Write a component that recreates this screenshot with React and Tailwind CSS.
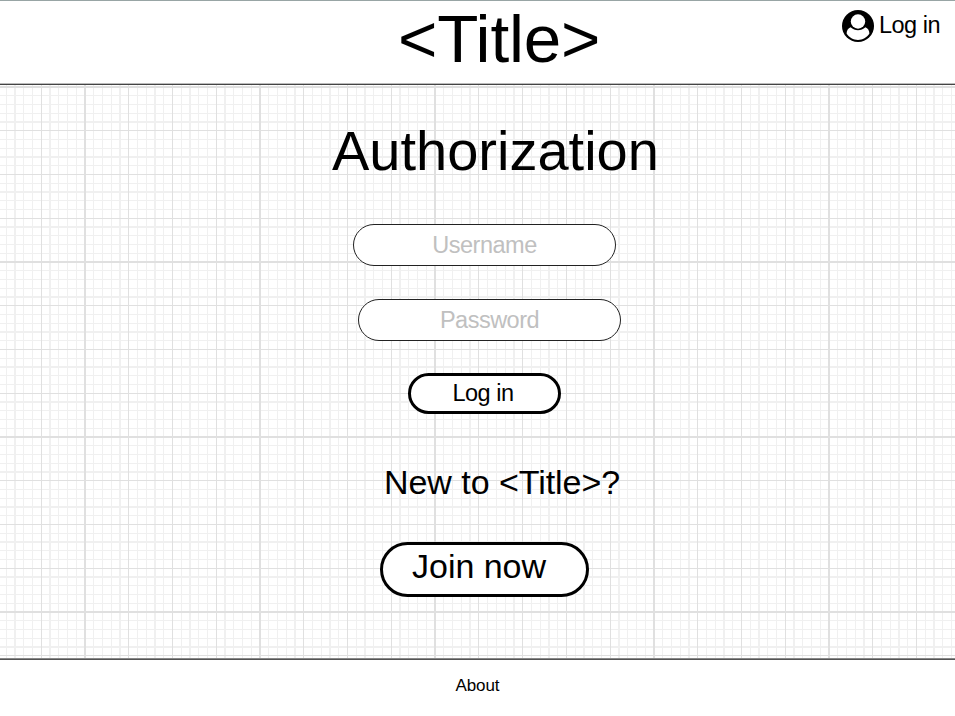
import React from "react";

// One tile of the graph paper is 175px wide and holds 20 cells of 8.75px.
const TILE = 175;
const STEPS = Array.from({ length: 20 }, (_, i) => {
  const at = i * 8.75;
  const whole = Number.isInteger(at);
  return { start: whole ? at : Math.floor(at) + 1, size: whole ? 2 : 1, major: i % 5 === 0 };
});
const ORDERED = [...STEPS.filter((s) => !s.major), ...STEPS.filter((s) => s.major)];

function PaperPattern({ id, x }) {
  return (
    <pattern id={id} x={x} y="1" width={TILE} height={TILE} patternUnits="userSpaceOnUse">
      {ORDERED.map((s) => (
        <g key={s.start} fill={s.major ? "#e0e0e0" : "#f0f0f0"}>
          <rect x={s.start} y="0" width={s.size} height={TILE} />
          <rect x="0" y={s.start} width={TILE} height={s.size} />
        </g>
      ))}
    </pattern>
  );
}

// Two sheets of paper meet at x = 480, each with its own origin.
function GridPaper() {
  return (
    <svg className="absolute inset-0 h-full w-full" shapeRendering="crispEdges" aria-hidden="true">
      <defs>
        <PaperPattern id="paper-left" x="84" />
        <PaperPattern id="paper-right" x="128" />
      </defs>
      <rect width="480" height="100%" fill="url(#paper-left)" />
      <rect x="480" width="475" height="100%" fill="url(#paper-right)" />
    </svg>
  );
}

function UserIcon() {
  return (
    <svg className="h-8 w-8" viewBox="0 0 32 32" aria-hidden="true">
      <circle cx="16" cy="16" r="16" fill="#000" />
      <path d="M4.600 23.600C4.600 20.500 6.200 18.200 8.600 17.300C12.800 21.300 19.200 21.300 23.400 17.300C25.800 18.200 27.400 20.500 27.400 23.600C24.800 27.700 20.700 29.900 16 29.900S7.200 27.700 4.600 23.600Z" fill="#fff" />
      <circle cx="16" cy="11.500" r="7.200" fill="#fff" />
    </svg>
  );
}

function Field({ label, className }) {
  return (
    <input
      aria-label={label}
      placeholder={label}
      className={`block h-[42px] rounded-full border border-[#222] bg-white p-0 pt-px text-center text-[23.5px] leading-[39px] tracking-[-0.5px] outline-none placeholder:text-[#c0c0c0] placeholder:opacity-100 ${className}`}
    />
  );
}

export default function App() {
  return (
    <div className="flex h-[716px] w-[955px] flex-col overflow-hidden bg-white font-['Liberation_Sans',Arial,sans-serif] text-black">
      <header className="flex h-[85px] shrink-0 justify-between border-b border-t border-b-[#444] border-t-[#98a5a5] shadow-[inset_0_-1px_0_#bbb]">
        <h1 className="ml-[398px] whitespace-nowrap text-[67.4px] leading-[76px] tracking-[-0.2px]">&lt;Title&gt;</h1>
        <a className="mr-[15px] mt-[9px] flex h-8 items-center gap-[5px] whitespace-nowrap text-[23.5px] leading-8 tracking-[-0.5px]">
          <UserIcon />
          <span className="-mt-[2px]">Log in</span>
        </a>
      </header>

      <main className="relative h-[573px] shrink-0">
        <GridPaper />
        <div className="relative flex flex-col items-start">
          <h2 className="ml-[332px] mt-[38px] whitespace-nowrap text-[56px] leading-[56px]">Authorization</h2>
          <Field label="Username" className="ml-[353px] mt-[45px] w-[263px]" />
          <Field label="Password" className="ml-[358px] mt-[33px] w-[263px]" />
          <button className="ml-[408px] mt-[32px] h-[41px] w-[153px] rounded-full border-3 border-black bg-white pr-[3px] text-[23.5px] leading-[33px] tracking-[-0.5px]">
            Log in
          </button>
          <p className="ml-[384px] mt-[48px] whitespace-nowrap text-[34px] leading-[40px] tracking-[-0.05px]">New to &lt;Title&gt;?</p>
          <button className="ml-[380px] mt-[40px] h-[55px] w-[209px] rounded-full border-3 border-black bg-white pb-[7px] pr-[11px] text-[34px] leading-[42px] tracking-[-0.05px]">
            Join now
          </button>
        </div>
      </main>

      <footer className="flex h-[58px] shrink-0 justify-center border-t border-[#888] shadow-[inset_0_1px_0_#555]">
        <span className="mt-[17px] text-[17px] leading-5 tracking-[-0.1px]">About</span>
      </footer>
    </div>
  );
}
